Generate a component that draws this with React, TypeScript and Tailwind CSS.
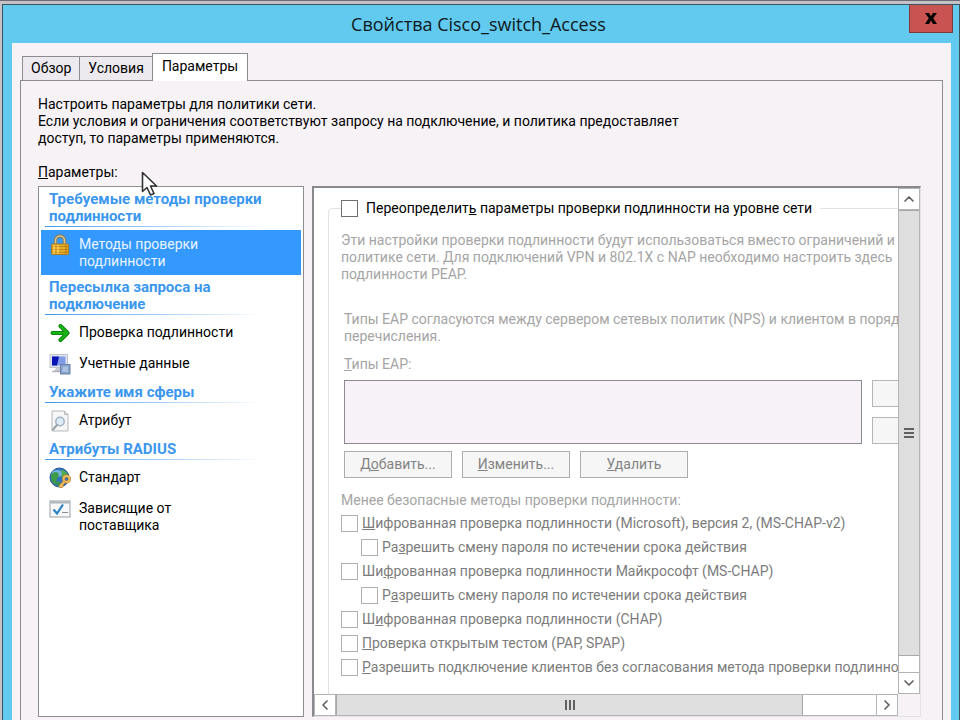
import { useState } from "react";
import type { ReactNode } from "react";
import { ChevronDown, ChevronLeft, ChevronRight, ChevronUp } from "lucide-react";

const TABS = ["Обзор", "Условия", "Параметры"];

function LockIcon() {
  return (
    <svg width="20" height="22" viewBox="0 0 20 22">
      <path d="M5.500 11V6.500a4.500 4.500 0 0 1 9 0V11" fill="none" stroke="#8a7a50" strokeWidth="3.400" />
      <path d="M5.500 11V6.500a4.500 4.500 0 0 1 9 0V11" fill="none" stroke="#d9c995" strokeWidth="1.500" />
      <rect x="1.500" y="10" width="17" height="10.500" rx="1" fill="#e8ae2c" stroke="#a87a1c" />
      <path d="M2 12.500h16M2 15.500h16M2 18.300h16" stroke="#bd8518" strokeWidth="1" />
      <path d="M4 11v9M8 11v9" stroke="#ffdc72" strokeWidth="1.500" opacity=".7" />
      <path d="M16 11v9" stroke="#b57c14" strokeWidth="2" opacity=".6" />
    </svg>
  );
}

function ArrowIcon() {
  return (
    <svg width="20" height="20" viewBox="0 0 20 20">
      <path d="M2.500 10H17M10.500 3l7 7-7 7" fill="none" stroke="#087c08" strokeWidth="4" strokeLinecap="round" strokeLinejoin="round" />
      <path d="M2.500 10H16.500M10.500 3l7 7-7 7" fill="none" stroke="#16b416" strokeWidth="2.400" strokeLinecap="round" strokeLinejoin="round" />
    </svg>
  );
}

function ComputerIcon() {
  return (
    <svg width="22" height="22" viewBox="0 0 22 22">
      <rect x="1" y="1.500" width="17.500" height="13" fill="#e2e4ec" stroke="#c0c3cf" />
      <rect x="3" y="3.500" width="13.500" height="9" fill="#7f9bea" />
      <path d="M3 3.500h7l-2 9H3z" fill="#0a14b4" />
      <path d="M7 15h6l1 3H5z" fill="#c9ccd6" />
      <path d="M3 18.500h9" stroke="#aeb2be" strokeWidth="1.500" />
      <rect x="11.500" y="11.500" width="9.500" height="9.500" fill="#86a2cc" stroke="#6c82a6" />
      <rect x="13.500" y="13.500" width="5.500" height="5.500" fill="#a9c1e2" />
    </svg>
  );
}

function SearchPageIcon() {
  return (
    <svg width="20" height="22" viewBox="0 0 20 22">
      <path d="M2 1h12.500l3.500 3.500V21H2z" fill="#f6f6f6" stroke="#b8b8b8" />
      <path d="M14.500 1v3.500H18" fill="#ddd" stroke="#b8b8b8" />
      <circle cx="10" cy="11.500" r="4.200" fill="#dcedf8" stroke="#a3b1c1" strokeWidth="1.500" />
      <path d="M7 15l-4 4.500" stroke="#9aa2ab" strokeWidth="2" strokeLinecap="round" />
    </svg>
  );
}

function GlobeIcon() {
  return (
    <svg width="22" height="22" viewBox="0 0 22 22">
      <circle cx="10.500" cy="10.500" r="9.500" fill="#2f74c0" stroke="#2c5a94" />
      <ellipse cx="8" cy="6.500" rx="5.500" ry="3.500" fill="#8cc8ee" opacity=".75" />
      <path d="M2 8c2-3 5-4 7-2s0 4-1 6 0 4-2 5-4-4-4-9z" fill="#3f9b48" />
      <path d="M12 3c3 0 6 2 7 5l-3 4-4-2 1-3z" fill="#54ad4c" />
      <path d="M6 16l4-2 2 4-2 2z" fill="#3b9145" />
      <circle cx="17.500" cy="12" r="3" fill="none" stroke="#a8742a" strokeWidth="3" />
      <circle cx="17.500" cy="12" r="3" fill="none" stroke="#edba5c" strokeWidth="2" />
      <path d="M15.500 14.500L10.500 20m1.500-2l2 2" stroke="#a8742a" strokeWidth="3.200" />
      <path d="M15.500 14.500L10.500 20m1.500-2l2 2" stroke="#edba5c" strokeWidth="2" />
    </svg>
  );
}

function ChecklistIcon() {
  return (
    <svg width="22" height="18" viewBox="0 0 22 18">
      <rect x="1" y="1" width="20" height="16" fill="#f7f8fa" stroke="#9a9fa6" />
      <path d="M1.500 2.500h19" stroke="#b0b5bc" strokeWidth="2" />
      <path d="M4.500 9.500l3.500 4 6-9" fill="none" stroke="#2b83c6" strokeWidth="2.200" />
      <path d="M13 12.500h6" stroke="#8a8f96" strokeWidth="1" />
    </svg>
  );
}

type NavItem = { id: string; label: string; icon: ReactNode };
type NavGroup = { title: string; items: NavItem[] };

const GROUPS: NavGroup[] = [
  {
    title: "Требуемые методы проверки подлинности",
    items: [{ id: "methods", label: "Методы проверки подлинности", icon: <LockIcon /> }],
  },
  {
    title: "Пересылка запроса на подключение",
    items: [
      { id: "auth", label: "Проверка подлинности", icon: <ArrowIcon /> },
      { id: "accounting", label: "Учетные данные", icon: <ComputerIcon /> },
    ],
  },
  {
    title: "Укажите имя сферы",
    items: [{ id: "attribute", label: "Атрибут", icon: <SearchPageIcon /> }],
  },
  {
    title: "Атрибуты RADIUS",
    items: [
      { id: "standard", label: "Стандарт", icon: <GlobeIcon /> },
      { id: "vendor", label: "Зависящие от поставщика", icon: <ChecklistIcon /> },
    ],
  },
];

const METHODS = [
  { id: "mschap2", pre: "", key: "Ш", post: "ифрованная проверка подлинности (Microsoft), версия 2, (MS-CHAP-v2)", nested: false },
  { id: "mschap2-change", pre: "Ра", key: "з", post: "решить смену пароля по истечении срока действия", nested: true },
  { id: "mschap", pre: "Ши", key: "ф", post: "рованная проверка подлинности Майкрософт (MS-CHAP)", nested: false },
  { id: "mschap-change", pre: "Р", key: "а", post: "зрешить смену пароля по истечении срока действия", nested: true },
  { id: "chap", pre: "Ш", key: "и", post: "фрованная проверка подлинности (CHAP)", nested: false },
  { id: "pap", pre: "", key: "П", post: "роверка открытым тестом (PAP, SPAP)", nested: false },
  { id: "none", pre: "", key: "Р", post: "азрешить подключение клиентов без согласования метода проверки подлинности", nested: false },
];

const EAP_BUTTONS = [
  { pre: "Д", key: "о", post: "бавить..." },
  { pre: "", key: "И", post: "зменить..." },
  { pre: "", key: "У", post: "далить" },
];

function ScrollButton({ label, children }: { label: string; children: ReactNode }) {
  return (
    <button
      type="button"
      aria-label={label}
      className="flex size-[22px] shrink-0 items-center justify-center border border-[#b4b4b4] bg-white text-[#606060]"
    >
      {children}
    </button>
  );
}

function Sidebar() {
  const [selected, setSelected] = useState("methods");

  return (
    <nav aria-labelledby="params-label" className="w-[266px] shrink-0 border border-[#8e8d92] bg-white px-0.5">
      {GROUPS.map((group) => (
        <section key={group.title}>
          <h2 className="pt-1 pr-8 pl-2 text-[15px] leading-[17px] font-bold text-[#3b97ee]">{group.title}</h2>
          <div className="mt-px mr-9 mb-[3px] ml-1 h-px bg-linear-to-r from-[#3b97ee] to-white" />
          {group.items.map((item) => (
            <button
              key={item.id}
              type="button"
              onClick={() => setSelected(item.id)}
              className={
                item.id === selected
                  ? "flex w-full gap-2 bg-[#3399ff] pt-1.5 pr-20 pb-[5px] pl-2 text-left text-[#eaf4ff]"
                  : "flex w-full gap-2 bg-white pt-1.5 pr-20 pb-2 pl-2 text-left"
              }
            >
              <span className="flex h-[17px] w-[22px] shrink-0 items-center justify-center">{item.icon}</span>
              <span className={item.id === "auth" ? "whitespace-nowrap" : ""}>{item.label}</span>
            </button>
          ))}
        </section>
      ))}
    </nav>
  );
}

function AuthMethods() {
  const [override, setOverride] = useState(false);

  return (
    <div className="min-h-0 min-w-0 overflow-hidden pt-3 pl-3.5">
      <fieldset className="h-[600px] w-[720px] rounded border border-[#e2e2e4] pl-3 whitespace-nowrap text-[#a5a5a5]">
        <legend className="pr-2">
          <label className="flex items-center gap-2 text-black">
            <input
              type="checkbox"
              checked={override}
              onChange={(e) => setOverride(e.target.checked)}
              className="size-[17px] appearance-none border border-[#707070] bg-white checked:bg-[#3399ff]"
            />
            <span>
              Переопределит<u>ь</u> параметры проверки подлинности на уровне сети
            </span>
          </label>
        </legend>

        <p className="mt-[15px]">
          Эти настройки проверки подлинности будут использоваться вместо ограничений и
          параметров в<br />
          политике сети. Для подключений VPN и 802.1X с NAP необходимо настроить здесь
          <br />
          подлинности PEAP.
        </p>

        <div className="mt-7 pl-[3px]">
          <p>
            Типы EAP согласуются между сервером сетевых политик (NPS) и клиентом в порядке
            их<br />
            перечисления.
          </p>
          <label htmlFor="eap-types" className="mt-[11px] block">
            <u>Т</u>ипы EAP:
          </label>
          <div className="mt-[7px] flex gap-2.5">
            <select
              id="eap-types"
              size={4}
              disabled={!override}
              className="h-16 w-[518px] appearance-none border border-[#8d8c92] bg-[#f6f2f7] opacity-100"
            />
            <div className="flex flex-col justify-between">
              <button type="button" aria-label="Вверх" disabled className="h-[27px] w-24 border border-[#b5b5b5] bg-[#f6f6f6]" />
              <button type="button" aria-label="Вниз" disabled className="h-[27px] w-24 border border-[#b5b5b5] bg-[#f6f6f6]" />
            </div>
          </div>
          <div className="mt-[7px] flex gap-2.5">
            {EAP_BUTTONS.map((b) => (
              <button
                key={b.key}
                type="button"
                disabled={!override}
                className="h-[27px] w-[108px] border border-[#adadad] bg-[#f6f6f6] text-[#838383]"
              >
                {b.pre}
                <u>{b.key}</u>
                {b.post}
              </button>
            ))}
          </div>
        </div>

        <p className="mt-3.5">Менее безопасные методы проверки подлинности:</p>
        <div className="mt-0.5 text-[#7c7c7c]">
          {METHODS.map((m) => (
            <label key={m.id} className={m.nested ? "flex h-6 items-center gap-1 pl-5" : "flex h-6 items-center gap-1"}>
              <input
                type="checkbox"
                disabled={!override}
                className="size-[17px] shrink-0 appearance-none border border-[#b0b0b0] bg-white"
              />
              <span>
                {m.pre}
                <u>{m.key}</u>
                {m.post}
              </span>
            </label>
          ))}
        </div>
      </fieldset>
    </div>
  );
}

function DetailsPane() {
  return (
    <div className="grid min-w-0 flex-1 grid-cols-[minmax(0,1fr)_22px] grid-rows-[minmax(0,1fr)_22px] border-2 border-r border-b border-[#8a898d] border-r-[#e4e2e6] border-b-[#e4e2e6] bg-white">
      <AuthMethods />
      <div className="flex min-h-0 flex-col border-x border-[#b4b4b4]">
        <div className="-mx-px flex">
          <ScrollButton label="Прокрутить вверх">
            <ChevronUp size={16} strokeWidth={2.5} />
          </ScrollButton>
        </div>
        <div className="flex flex-1 flex-col items-center justify-center gap-0.5 border-y border-[#a8a8a8] bg-[#dedede]">
          <i className="h-0.5 w-2.5 bg-[#606060]" />
          <i className="h-0.5 w-2.5 bg-[#606060]" />
          <i className="h-0.5 w-2.5 bg-[#606060]" />
        </div>
        <div className="-mx-px flex pt-4">
          <ScrollButton label="Прокрутить вниз">
            <ChevronDown size={16} strokeWidth={2.5} />
          </ScrollButton>
        </div>
      </div>
      <div className="flex border-y border-[#b4b4b4]">
        <div className="-my-px flex">
          <ScrollButton label="Прокрутить влево">
            <ChevronLeft size={16} strokeWidth={2.5} />
          </ScrollButton>
        </div>
        <div className="flex flex-1 items-center justify-center gap-0.5 border-x border-[#a8a8a8] bg-[#dedede]">
          <i className="h-2.5 w-0.5 bg-[#606060]" />
          <i className="h-2.5 w-0.5 bg-[#606060]" />
          <i className="h-2.5 w-0.5 bg-[#606060]" />
        </div>
        <div className="-my-px flex pl-[73px]">
          <ScrollButton label="Прокрутить вправо">
            <ChevronRight size={16} strokeWidth={2.5} />
          </ScrollButton>
        </div>
      </div>
      <div className="bg-[#f6f2f6]" />
    </div>
  );
}

export default function App() {
  const [tab, setTab] = useState("Параметры");

  return (
    <div className="relative flex h-screen flex-col overflow-hidden border-t border-[#6e6b72] bg-[#c4c2c8] pt-[3px] pl-0.5 font-['Roboto','Liberation_Sans',sans-serif] text-[14px] leading-[17px] text-black">
      <main className="flex min-h-0 flex-1 flex-col border border-b-0 border-[#3c5560] bg-[#62caef] pr-2 pl-[9px]">
        <header className="flex h-[38px] shrink-0 items-start">
          <h1 className="flex-1 pt-[7px] pl-9 text-center font-['Open_Sans',sans-serif] text-[18px] leading-6 text-[#101820]">
            Свойства Cisco_switch_Access
          </h1>
          <button
            type="button"
            aria-label="Закрыть"
            className="-mr-0.5 flex h-7 w-11 items-center justify-center border border-t-0 border-[#7d3c3c] bg-[#c75450]"
          >
            <svg width="12" height="11" viewBox="0 0 12 11">
              <path d="M0 0h4l2 3.200L8 0h4L8.200 5.300 12 11H8L6 7.500 4 11H0l3.800-5.700z" fill="#000" />
            </svg>
          </button>
        </header>

        <div className="flex min-h-0 flex-1 flex-col bg-[#f6f2f6] pt-2.5 pr-2 pl-2">
          <div role="tablist" className="z-10 -mb-px flex items-end pl-0.5">
            {TABS.map((t) => (
              <button
                key={t}
                type="button"
                role="tab"
                aria-selected={t === tab}
                onClick={() => setTab(t)}
                className={
                  t === tab
                    ? "h-7 border border-b-0 border-[#8c8b90] bg-white px-[9px] pb-0.5"
                    : "mb-px h-6 border border-r-0 border-b-0 border-[#8c8b90] bg-[#eceaee] px-2"
                }
              >
                {t}
              </button>
            ))}
          </div>

          <div className="flex min-h-0 flex-1 flex-col border border-b-0 border-[#8c8b90] pt-[15px] pr-[21px] pb-[3px] pl-[17px]">
            <p>
              Настроить параметры для политики сети.
              <br />
              Если условия и ограничения соответствуют запросу на подключение, и политика
              предоставляет
              <br />
              доступ, то параметры применяются.
            </p>
            <p id="params-label" className="mt-[17px] mb-[5px]">
              <u>П</u>араметры:
            </p>
            <div className="flex min-h-0 flex-1 gap-2">
              <Sidebar />
              <DetailsPane />
            </div>
          </div>
        </div>
      </main>

      <svg className="pointer-events-none absolute top-[170px] left-[141px] z-20" width="18" height="26" viewBox="0 0 18 26">
        <path d="M1.500 1.500v19l4.500-4 3.500 7.500 3.500-1.500-3.500-7.500h6z" fill="#fff" stroke="#333" strokeWidth="1.600" strokeLinejoin="round" />
      </svg>
    </div>
  );
}
